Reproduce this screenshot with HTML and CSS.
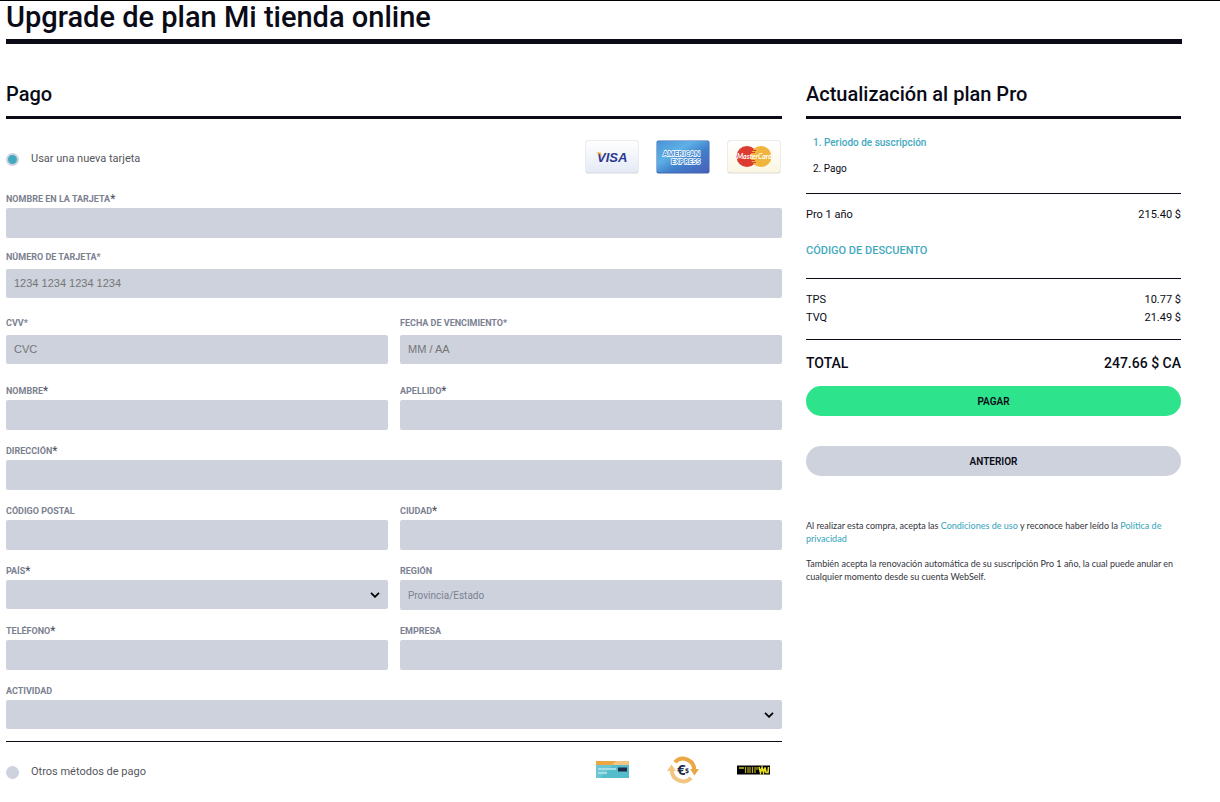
FILE: index.html
```
<!DOCTYPE html>
<html lang="es">
<head>
    <meta charset="UTF-8">
    <meta name="viewport" content="width=device-width, initial-scale=1.0">
    <title>Upgrade de plan Mi tienda online</title>
    <link rel="stylesheet" href="styles.css">
</head>
<body>
    <div class="container">
        <h1>Upgrade de plan Mi tienda online</h1>

        <form class="columns" id="form-pago">
            <section class="payment">
                <h2>Pago</h2>

                <div class="method">
                    <label class="radio">
                        <input type="radio" name="metodo" value="tarjeta" checked>
                        Usar una nueva tarjeta
                    </label>
                    <div class="logos">
                        <svg class="logo" width="54" height="34" viewBox="0 0 54 34" role="img" aria-label="Visa">
                            <defs>
                                <linearGradient id="visa-bg" x1="0" y1="0" x2="0" y2="1">
                                    <stop offset="0" stop-color="#ffffff"/>
                                    <stop offset="1" stop-color="#e4eaf5"/>
                                </linearGradient>
                            </defs>
                            <rect x="0.5" y="0.5" width="53" height="33" rx="2" fill="#d5d8de"/>
                            <rect x="1" y="1" width="52" height="31.5" rx="2" fill="url(#visa-bg)"/>
                            <text class="visa" x="12" y="22" font-size="13" fill="#2b3990">VISA</text>
                            <path d="M11 12.5h4.500l1.500 4.500q-2-3.500-6-4.500z" fill="#f0a92c"/>
                        </svg>
                        <svg class="logo" width="54" height="34" viewBox="0 0 54 34" role="img" aria-label="American Express">
                            <defs>
                                <linearGradient id="amex-bg" x1="0" y1="0" x2="1" y2="1">
                                    <stop offset="0" stop-color="#4a93d6"/>
                                    <stop offset="0.35" stop-color="#5fb0e6"/>
                                    <stop offset="0.6" stop-color="#4080cc"/>
                                    <stop offset="1" stop-color="#4a5fb8"/>
                                </linearGradient>
                            </defs>
                            <rect x="0.5" y="0.5" width="53" height="33" rx="2" fill="#3d62ac"/>
                            <rect x="1" y="1" width="52" height="31.5" rx="2" fill="url(#amex-bg)"/>
                            <g font-size="7" font-weight="bold" fill="#4a8fd4" stroke="#ffffff" stroke-width="1.4" paint-order="stroke">
                                <text x="7" y="16">AMERICAN</text>
                                <text x="15" y="24">EXPRESS</text>
                            </g>
                        </svg>
                        <svg class="logo" width="54" height="34" viewBox="0 0 54 34" role="img" aria-label="MasterCard">
                            <defs>
                                <linearGradient id="mc-bg" x1="0" y1="0" x2="0" y2="1">
                                    <stop offset="0" stop-color="#ffffff"/>
                                    <stop offset="1" stop-color="#fbf6e2"/>
                                </linearGradient>
                            </defs>
                            <rect x="0.5" y="0.5" width="53" height="33" rx="2" fill="#dcdad4"/>
                            <rect x="1" y="1" width="52" height="31.5" rx="2" fill="url(#mc-bg)"/>
                            <circle cx="20" cy="16.5" r="10.5" fill="#dd3a30"/>
                            <circle cx="34" cy="16.5" r="10.5" fill="#f0b53c"/>
                            <path d="M25 10.500h4M24 12.500h4M24 20.500h4M25 22.500h4" stroke="#dd3a30"/>
                            <text class="mastercard" x="10" y="19" font-size="7" fill="#ffffff">MasterCard</text>
                        </svg>
                    </div>
                </div>

                <div class="field">
                    <label for="titular">Nombre en la tarjeta<span class="required">*</span></label>
                    <input type="text" id="titular">
                </div>

                <div class="field card-field">
                    <label for="numero">Número de tarjeta*</label>
                    <input type="text" id="numero" placeholder="1234 1234 1234 1234">
                </div>

                <div class="row">
                    <div class="field card-field">
                        <label for="cvv">CVV*</label>
                        <input type="text" id="cvv" placeholder="CVC">
                    </div>
                    <div class="field card-field">
                        <label for="vencimiento">Fecha de vencimiento*</label>
                        <input type="text" id="vencimiento" placeholder="MM / AA">
                    </div>
                </div>

                <div class="row">
                    <div class="field">
                        <label for="nombre">Nombre<span class="required">*</span></label>
                        <input type="text" id="nombre">
                    </div>
                    <div class="field">
                        <label for="apellido">Apellido<span class="required">*</span></label>
                        <input type="text" id="apellido">
                    </div>
                </div>

                <div class="field">
                    <label for="direccion">Dirección<span class="required">*</span></label>
                    <input type="text" id="direccion">
                </div>

                <div class="row">
                    <div class="field">
                        <label for="cp">Código postal</label>
                        <input type="text" id="cp">
                    </div>
                    <div class="field">
                        <label for="ciudad">Ciudad<span class="required">*</span></label>
                        <input type="text" id="ciudad">
                    </div>
                </div>

                <div class="row">
                    <div class="field">
                        <label for="pais">País<span class="required">*</span></label>
                        <div class="select">
                            <select id="pais"><option></option></select>
                            <svg class="chevron" width="10" height="6" viewBox="0 0 10 6" aria-hidden="true"><path d="M1 0.8l4 4 4-4" fill="none" stroke="#000" stroke-width="1.8"/></svg>
                        </div>
                    </div>
                    <div class="field">
                        <label for="region">Región</label>
                        <input type="text" id="region" placeholder="Provincia/Estado">
                    </div>
                </div>

                <div class="row">
                    <div class="field">
                        <label for="telefono">Teléfono<span class="required">*</span></label>
                        <input type="text" id="telefono">
                    </div>
                    <div class="field">
                        <label for="empresa">Empresa</label>
                        <input type="text" id="empresa">
                    </div>
                </div>

                <div class="field last-field">
                    <label for="actividad">Actividad</label>
                    <div class="select">
                        <select id="actividad"><option></option></select>
                        <svg class="chevron" width="10" height="6" viewBox="0 0 10 6" aria-hidden="true"><path d="M1 0.8l4 4 4-4" fill="none" stroke="#000" stroke-width="1.8"/></svg>
                    </div>
                </div>

                <div class="method other">
                    <label class="radio">
                        <input type="radio" name="metodo" value="otros">
                        Otros métodos de pago
                    </label>
                    <div class="logos">
                        <svg class="logo" width="54" height="34" viewBox="0 0 54 34" role="img" aria-label="Tarjeta">
                            <path d="M11 8h33v17H11z" fill="#55bccb"/>
                            <path d="M28 12l-13 13h-4V12z" fill="#6cc6d3"/>
                            <path d="M11 8h33v4H11z" fill="#eba743"/>
                            <path d="M31 8h13v4H27z" fill="#f2c583"/>
                            <path d="M13 15h18v2H13zM13 19h9v2h-9z" fill="#a5dde5"/>
                            <path d="M33 14.500h9v4h-9z" fill="#1f2a44"/>
                        </svg>
                        <svg class="logo" width="54" height="34" viewBox="0 0 54 34" role="img" aria-label="Transferencia">
                            <path d="M18.900 9.200A11.200 11.200 0 0 1 38.200 17" fill="none" stroke="#eba743" stroke-width="4"/>
                            <path d="M34 16h9l-4.500 6.500z" fill="#eba743"/>
                            <path d="M35.100 24.800A11.200 11.200 0 0 1 15.800 17" fill="none" stroke="#f2c583" stroke-width="4"/>
                            <path d="M11 18h9l-4.500-6.500z" fill="#f2c583"/>
                            <text x="21" y="22" font-size="15" font-weight="bold" fill="#1f2a44">€</text>
                            <text x="29" y="20" font-size="7" font-weight="bold" fill="#1f2a44">$</text>
                        </svg>
                        <svg class="logo" width="54" height="34" viewBox="0 0 54 34" role="img" aria-label="Western Union">
                            <path d="M10 12.500h33v9H10z" fill="#000"/>
                            <path d="M12 15h5" stroke="#c9c024" stroke-width="1.5"/>
                            <path d="M18.500 14v6M21 14v6M23 14v6M25.500 14v6M28 14v6M30 14v3" stroke="#b5ad1c" stroke-width="1.2"/>
                            <path d="M32 14l1.500 5.500 1.500-5 1.500 5 1.500-5 1 5h2l.500-5.500" fill="none" stroke="#ece21f" stroke-width="1.600"/>
                        </svg>
                    </div>
                </div>
            </section>

            <aside class="summary">
                <h2>Actualización al plan Pro</h2>

                <ol class="steps">
                    <li><a href="#periodo">1. Periodo de suscripción</a></li>
                    <li>2. Pago</li>
                </ol>

                <div class="block plan">
                    <div class="line"><span>Pro 1 año</span><span>215.40 $</span></div>
                    <a class="discount" href="#descuento">CÓDIGO DE DESCUENTO</a>
                </div>

                <div class="block">
                    <div class="line"><span>TPS</span><span>10.77 $</span></div>
                    <div class="line"><span>TVQ</span><span>21.49 $</span></div>
                </div>

                <div class="block total">
                    <div class="line"><span>TOTAL</span><span>247.66 $ CA</span></div>
                </div>

                <button type="submit" class="pay">PAGAR</button>
                <button type="button" class="back">ANTERIOR</button>

                <div class="legal">
                    <p>Al realizar esta compra, acepta las <a href="#condiciones">Condiciones de uso</a> y reconoce haber leído la <a href="#privacidad">Política de privacidad</a></p>
                    <p>También acepta la renovación automática de su suscripción Pro 1 año, la cual puede anular en cualquier momento desde su cuenta WebSelf.</p>
                </div>
            </aside>
        </form>
    </div>
</body>
</html>
```
FILE: styles.css
```
* {
    box-sizing: border-box;
}

body {
    margin: 0;
    border-top: 1px solid #000;
    font-family: Roboto, "Open Sans", sans-serif;
    font-size: 11px;
    line-height: 18px;
    color: #0a0b16;
    background-color: #fff;
}

h1, h2, p {
    margin: 0;
    font-weight: 500;
}

a {
    color: #43a9c0;
    font-weight: 500;
    text-decoration: none;
}

.container {
    padding: 0 38px 16px 6px;
}

h1 {
    height: 43px;
    border-bottom: 5px solid #0a0b16;
    font-size: 29px;
    line-height: 32px;
}

.columns {
    display: grid;
    grid-template-columns: minmax(0, 1fr) 375px;
    gap: 24px;
    padding: 32px 1px 0 0;
}

h2 {
    padding-bottom: 4px;
    border-bottom: 3px solid #0a0b16;
    font-size: 20px;
    line-height: 36px;
}

/* Métodos de pago */
.method {
    display: flex;
    justify-content: space-between;
    align-items: center;
    padding: 21px 1px 14px 0;
}

.radio {
    display: flex;
    align-items: center;
    gap: 12px;
    padding-top: 4px;
    color: #55565c;
}

.radio input {
    appearance: none;
    width: 13px;
    height: 13px;
    margin: 0;
    border-radius: 50%;
    background-color: #ced2dd;
}

.radio input:checked {
    background-color: #43a9c0;
    border: 2px solid #ced2dd;
}

.logos {
    display: flex;
    gap: 17px;
}

.logo {
    display: block;
    font-family: "Open Sans", sans-serif;
}

.visa {
    font-family: "Liberation Sans", Arial, sans-serif;
    font-style: italic;
    font-weight: bold;
}

.mastercard {
    font-family: Lato, sans-serif;
    font-style: italic;
    font-weight: bold;
}

.other {
    padding: 11px 1px 0 0;
    border-top: 1px solid #0a0b16;
}

/* Campos */
.row {
    display: grid;
    grid-template-columns: 1fr 1fr;
    gap: 12px;
}

.field {
    margin-bottom: 10px;
}

.field label {
    display: flex;
    height: 20px;
    padding-top: 1px;
    color: #7b8190;
    font-size: 9px;
    font-weight: 700;
    line-height: 20px;
    text-transform: uppercase;
}

.required {
    color: #4c4e57;
    font-size: 12px;
    font-weight: 400;
}

.field input,
.field select {
    display: block;
    width: 100%;
    height: 30px;
    padding: 0 8px;
    border: 0;
    border-radius: 2px;
    background-color: #ced2dd;
    color: #0a0b16;
    font-family: inherit;
    font-size: 10px;
}

.field input::placeholder {
    color: #7b8190;
}

.card-field {
    margin-bottom: 16px;
}

.card-field label {
    height: 21px;
    padding-top: 0;
    line-height: 18px;
}

.card-field input {
    height: 29px;
    padding-bottom: 2px;
    font-family: "Liberation Sans", Arial, sans-serif;
    font-size: 11px;
}

.card-field input::placeholder {
    color: #757575;
}

.select {
    position: relative;
    height: 30px;
}

.field select {
    appearance: none;
    height: 29px;
}

.chevron {
    position: absolute;
    right: 8px;
    top: 12px;
    pointer-events: none;
}

.last-field {
    margin-bottom: 11px;
}

/* Resumen */
.steps {
    margin: 0;
    padding: 11px 7px;
    list-style: none;
    font-size: 10px;
    line-height: 26px;
}

.block {
    padding: 12px 0;
    border-top: 1px solid #0a0b16;
}

.line {
    display: flex;
    justify-content: space-between;
}

.plan .line {
    margin-bottom: 18px;
}

.discount {
    display: block;
    padding-bottom: 6px;
}

.total {
    padding: 14px 0;
    font-size: 14px;
    font-weight: 500;
}

button {
    display: block;
    width: 100%;
    height: 30px;
    border: 0;
    border-radius: 15px;
    color: #0a0b16;
    font-family: inherit;
    font-size: 10px;
    font-weight: 600;
    cursor: pointer;
}

.pay {
    margin-bottom: 30px;
    background-color: #2de38b;
}

.back {
    background-color: #ced2dd;
}

.legal {
    padding-top: 43px;
    color: #33343c;
    font-family: Lato, sans-serif;
    font-size: 9px;
    line-height: 13px;
}

.legal p {
    margin-bottom: 12px;
    font-weight: 400;
}

@media (max-width: 800px) {
    .columns {
        grid-template-columns: minmax(0, 1fr);
    }

    .container {
        padding-right: 6px;
    }
}
```
